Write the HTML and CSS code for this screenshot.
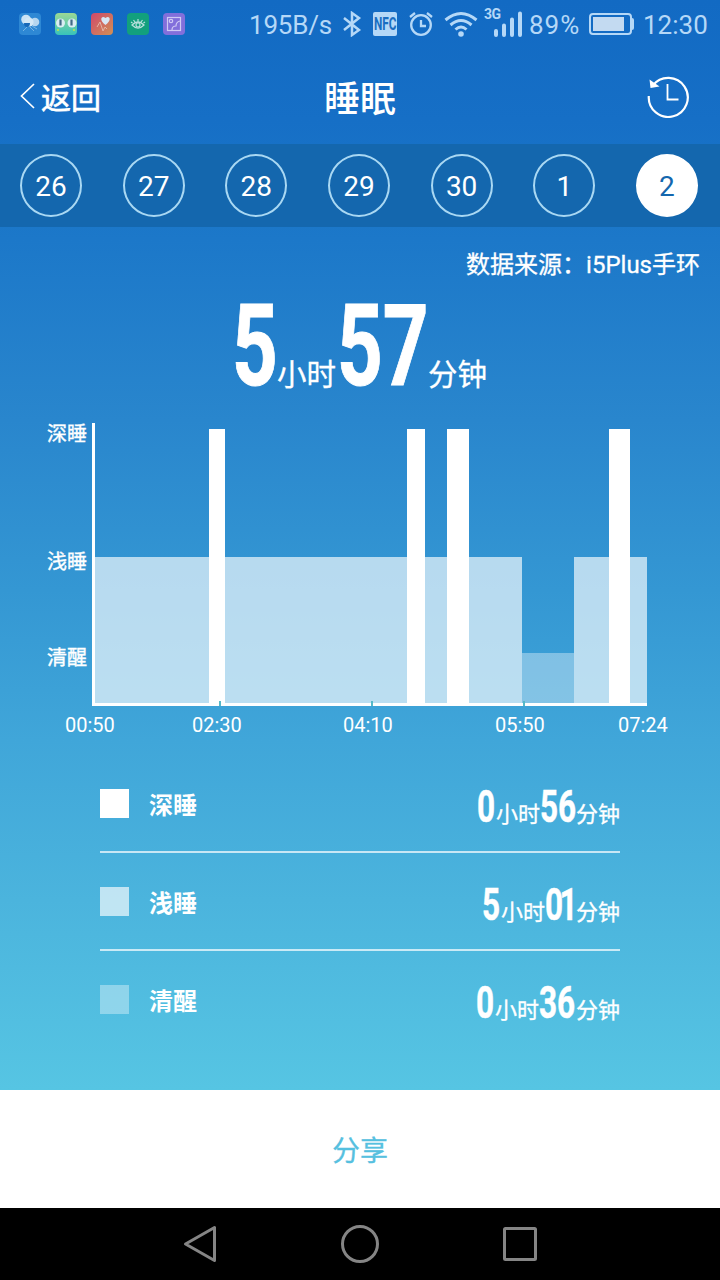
FILE: index.html
```html
<!DOCTYPE html>
<html lang="zh-CN">
<head>
<meta charset="utf-8">
<title>睡眠</title>
<link rel="stylesheet" href="styles.css">
</head>
<body>
<div class="screen">
  <div class="status">
    <div class="apps">
      <svg class="app" viewBox="0 0 22 22"><rect width="22" height="22" rx="4" fill="#2e88d4"/><circle cx="7" cy="6.500" r="4.800" fill="#cbe3f5"/><circle cx="16" cy="9" r="4.300" fill="#b5d6ef"/><circle cx="10" cy="9" r="4.600" fill="#d3e8f6"/><path d="M5 10h6q0 4-3 4t-3-4z" fill="#1769b9"/><path d="M8 14l-4 4M11 14l4 4M13 13l5 3" stroke="#74b4e4" fill="none"/></svg>
      <svg class="app" viewBox="0 0 22 22"><defs><linearGradient id="frog" x2="0" y2="1"><stop stop-color="#9bd895"/><stop offset="1" stop-color="#37c3ba"/></linearGradient></defs><rect width="22" height="22" rx="4" fill="url(#frog)"/><circle cx="5.500" cy="10" r="4.500" fill="#d9edf2"/><circle cx="17" cy="10" r="4.500" fill="#d9edf2"/><path d="M5.500 6.500v6M16.500 6.500v6" stroke="#416a87" stroke-width="2.200"/><path d="M2 17h2M18 17h2" stroke="#a5dd62" stroke-width="2"/></svg>
      <svg class="app" viewBox="0 0 22 22"><defs><linearGradient id="health" x2="1" y2="1"><stop stop-color="#d0486c"/><stop offset="1" stop-color="#d09155"/></linearGradient></defs><rect width="22" height="22" rx="4" fill="url(#health)"/><path d="M14.500 12c-7-5-4-10 0-7 4-3 7 2 0 7z" fill="#d9e7f4"/><path d="M6 14l3-5 3 9 2-4 2 2" stroke="#e3b4a5" fill="none"/></svg>
      <svg class="app" viewBox="0 0 22 22"><rect width="22" height="22" rx="4" fill="#12a07d"/><g fill="none" stroke="#b9e0dd" stroke-width="1.200"><path d="M5 12q6-6 12 0-6 6-12 0zM11 9V6M8 9L6.500 7M14 9l1.500-2M5.500 10L4 9M16.500 10L18 9"/><circle cx="11" cy="12" r="2"/></g></svg>
      <svg class="app" viewBox="0 0 22 22"><rect width="22" height="22" rx="4" fill="#826fdb"/><g fill="none" stroke="#cfc9f4" stroke-width="1.200"><rect x="4.500" y="4.500" width="13" height="13"/><circle cx="8" cy="8" r="1.700"/><path d="M9 17q0-4 4-4 0-4 4-5"/></g></svg>
    </div>
    <span class="speed">195B/s</span>
    <svg class="bt" viewBox="0 0 20 26"><path d="M2 7l15 12-7 5V2l7 5L2 19" fill="none" stroke="#b5d8f7" stroke-width="2.500"/></svg>
    <span class="nfc"><span class="nfc-text">NFC</span></span>
    <svg class="alarm" viewBox="0 0 26 26"><g fill="none" stroke="#b5d8f7" stroke-width="2.300"><circle cx="13" cy="14" r="9.800"/><path d="M13 9v6h5M2 6l5-4M24 6l-5-4"/></g></svg>
    <svg class="wifi" viewBox="0 0 34 26"><g fill="none" stroke="#b5d8f7" stroke-width="3"><path d="M1.500 9q15.500-13 31 0M6.500 14q10.500-9 21 0M11.500 18.500q5.500-5 11 0"/></g><circle cx="17" cy="23" r="2.800" fill="#b5d8f7"/></svg>
    <div class="signal"><span class="net">3G</span><svg class="bars" viewBox="0 0 30 26"><path d="M3 20v4M11 14.500v9.500M19 8.500v15.500M27 2.500v21.500" stroke="#b5d8f7" stroke-width="4" stroke-linecap="round"/></svg></div>
    <span class="percent">89%</span>
    <svg class="battery" viewBox="0 0 46 24"><rect x="1" y="2" width="41" height="20" rx="3" fill="none" stroke="#b5d8f7" stroke-width="2"/><rect x="4" y="5" width="31" height="14" fill="#c3daf1"/><path d="M43 6q2 0 2 2v8q0 2-2 2z" fill="#b5d8f7"/></svg>
    <span class="clock">12:30</span>
  </div>

  <header class="header">
    <div class="back"><svg class="chevron" viewBox="0 0 15 26"><path d="M14 1L1.500 13 14 25" fill="none" stroke="#fff" stroke-width="1.700"/></svg><span>返回</span></div>
    <h1 class="title">睡眠</h1>
    <svg class="history" viewBox="0 0 44 44"><path d="M2.800 22A19.500 19.500 0 1 0 6.800 11.500" fill="none" stroke="#fff" stroke-width="2.200"/><path d="M3.500 5.500l1 8.500 9-1.500z" fill="#fff"/><path d="M21.500 10v15.500h11" fill="none" stroke="#fff" stroke-width="1.800"/></svg>
  </header>

  <nav class="days">
    <span class="day">26</span><span class="day">27</span><span class="day">28</span><span class="day">29</span><span class="day">30</span><span class="day">1</span><span class="day day-active">2</span>
  </nav>

  <main class="content">
    <div class="source">数据来源：i5Plus手环</div>
    <div class="total"><span class="big one"><span class="narrow">5</span></span><span class="unit hours">小时</span><span class="big two"><span class="narrow">57</span></span><span class="unit">分钟</span></div>

    <section class="chart">
      <div class="levels"><span class="level deep-label">深睡</span><span class="level light-label">浅睡</span><span class="level">清醒</span></div>
      <div class="plot">
        <i class="light" style="width:114px"></i><i class="deep" style="width:16px"></i><i class="light" style="width:182px"></i><i class="deep" style="width:18px"></i><i class="light" style="width:21.500px"></i><i class="deep" style="width:22px"></i><i class="light" style="width:53.500px"></i><i class="awake" style="width:52px"></i><i class="light" style="width:35px"></i><i class="deep" style="width:21px"></i><i class="light" style="width:17px"></i>
        <b class="tick" style="left:124px"></b><b class="tick" style="left:276px"></b><b class="tick" style="left:428px"></b>
      </div>
    </section>
    <div class="times"><span>00:50</span><span>02:30</span><span>04:10</span><span>05:50</span><span>07:24</span></div>

    <section class="legend">
      <div class="row"><i class="swatch"></i><span class="name">深睡</span><div class="value"><span class="num w1"><span class="narrow">0</span></span><span class="small">小时</span><span class="num w2"><span class="narrow">56</span></span><span class="small">分钟</span></div></div>
      <div class="row"><i class="swatch swatch-light"></i><span class="name">浅睡</span><div class="value"><span class="num w1"><span class="narrow">5</span></span><span class="small">小时</span><span class="num w2 w2-slim"><span class="narrow">01</span></span><span class="small">分钟</span></div></div>
      <div class="row"><i class="swatch swatch-awake"></i><span class="name">清醒</span><div class="value"><span class="num w1"><span class="narrow">0</span></span><span class="small">小时</span><span class="num w2 w2-wide"><span class="narrow">36</span></span><span class="small">分钟</span></div></div>
    </section>
  </main>

  <div class="share">分享</div>
  <div class="softkeys">
    <svg class="key" viewBox="0 0 40 40"><path d="M5.500 20L34.500 3.500v33z" fill="none" stroke="#858585" stroke-width="3" stroke-linejoin="round"/></svg>
    <svg class="key" viewBox="0 0 40 40"><circle cx="20" cy="20" r="17.500" fill="none" stroke="#858585" stroke-width="3"/></svg>
    <svg class="key" viewBox="0 0 40 40"><rect x="4.500" y="4.500" width="31" height="31" rx="1" fill="none" stroke="#858585" stroke-width="3"/></svg>
  </div>
</div>
</body>
</html>
```
FILE: styles.css
```css
* { box-sizing: border-box; }
body { margin: 0; font-family: Roboto, "Noto Sans CJK SC", sans-serif; color: #fff; }
.screen {
  width: 720px; height: 1280px; overflow: hidden;
  display: flex; flex-direction: column;
  background: linear-gradient(#126ac3 0, #166fc6 120px, #1c78c9 240px, #2986cd 420px, #3497d3 590px, #40a6d9 740px, #4bb4dd 900px, #56c5e3 1090px);
}
svg { display: block; flex: none; }

.status { height: 48px; flex: none; display: flex; align-items: center; padding-left: 19px; color: #b5d8f7; font-size: 26px; line-height: 48px; white-space: nowrap; }
.apps { display: flex; gap: 14px; width: 230px; }
.app { width: 22px; height: 22px; }
.speed { width: 92px; letter-spacing: -.2px; padding-top: 2px; }
.bt { width: 20px; height: 26px; margin-left: 1px; }
.nfc { width: 24px; height: 24px; margin-left: 11px; border-radius: 2px; background: #b5d8f7; display: flex; justify-content: center; align-items: center; }
.nfc-text { color: #1a6ec1; font-size: 19px; font-weight: 700; transform: scaleX(.62); }
.alarm { width: 26px; height: 26px; margin-left: 11px; }
.wifi { width: 34px; height: 26px; margin-left: 10px; }
.signal { position: relative; width: 40px; height: 48px; margin-left: 6px; }
.net { position: absolute; left: 0; top: 6px; font-size: 14px; line-height: 16px; font-weight: 700; letter-spacing: -.5px; }
.bars { width: 30px; height: 26px; margin: 11px 0 0 9px; }
.percent { width: 60px; margin-left: 5px; padding-top: 2px; letter-spacing: 1px; }
.battery { width: 46px; height: 24px; }
.clock { margin-left: 8px; padding-top: 2px; }

.header { height: 96px; flex: none; display: grid; grid-template-columns: 1fr auto 1fr; align-items: center; padding: 0 30px 0 20px; }
.back { display: flex; align-items: center; gap: 6px; font-size: 30px; -webkit-text-stroke: .6px; }
.chevron { width: 15px; height: 26px; }
.title { margin: 7px 0 0 10px; font-size: 36px; line-height: 48px; font-weight: 500; }
.history { width: 44px; height: 44px; justify-self: end; }

.days { height: 83px; flex: none; display: flex; justify-content: space-between; padding: 10px 22px 0 20px; background: #1467ae; }
.day { width: 62px; height: 63px; border: 2px solid #a9d8f3; border-radius: 50%; font-size: 28px; line-height: 62px; text-align: center; }
.day-active { background: #fff; border-color: #fff; color: #1467ae; }

.content { height: 863px; flex: none; display: flex; flex-direction: column; }
.source { height: 59px; padding: 20px 20px 0 0; font-size: 24px; line-height: 36px; text-align: right; -webkit-text-stroke: .3px; }
.narrow { display: inline-block; transform: scaleX(.7); transform-origin: left; font-weight: 700; }
.total { height: 137px; padding-left: 232px; display: flex; align-items: baseline; line-height: 120px; }
.big { display: block; font-size: 114px; white-space: nowrap; -webkit-text-stroke: 1px; }
.one { width: 45px; }
.two { width: 91px; }
.unit { font-size: 29.500px; -webkit-text-stroke: .3px; }
.hours { width: 60px; }

.chart { height: 283px; display: flex; }
.levels { width: 92px; padding: 1px 5px 0 0; text-align: right; font-size: 20px; line-height: 20px; display: flex; flex-direction: column; -webkit-text-stroke: .4px; }
.deep-label { margin-bottom: 108px; }
.light-label { margin-bottom: 76px; }
.plot { position: relative; width: 555px; display: flex; align-items: flex-end; border-left: 3px solid #fff; border-bottom: 3px solid #fff; }
.deep, .light, .awake { flex: none; }
.deep { height: 274px; background: #fff; }
.light { height: 146px; background: rgba(255,255,255,.65); }
.awake { height: 50px; background: rgba(255,255,255,.36); }
.tick { position: absolute; bottom: -3px; width: 2px; height: 5px; background: #55b9c9; }
.times { display: grid; grid-template-columns: 127px 151px 152px 123px 50px; margin: 7px 0 0 65px; height: 42px; font-size: 20px; line-height: 24px; }

.legend { width: 520px; margin-left: 100px; }
.row { height: 98px; display: flex; align-items: center; border-bottom: 2px solid rgba(255,255,255,.7); }
.row:last-child { border-bottom-color: transparent; }
.swatch { width: 29px; height: 29px; background: #fff; }
.swatch-light { background: rgba(255,255,255,.65); }
.swatch-awake { background: rgba(255,255,255,.36); }
.name { margin-left: 20px; font-size: 24px; font-weight: 700; }
.value { margin-left: auto; display: flex; align-items: baseline; line-height: 60px; padding-top: 15px; }
.num { font-size: 45px; white-space: nowrap; -webkit-text-stroke: .5px; }
.w1 { width: 19px; }
.w2 { width: 36px; }
.w2-slim { width: 31px; letter-spacing: -5px; }
.w2-wide { width: 37px; }
.small { font-size: 22px; -webkit-text-stroke: .3px; }

.share { height: 118px; flex: none; display: flex; align-items: center; justify-content: center; background: #fff; color: #56c0df; font-size: 28px; -webkit-text-stroke: .3px; }
.softkeys { height: 72px; flex: none; display: flex; align-items: center; justify-content: center; gap: 120px; background: #000; }
.key { width: 40px; height: 40px; }
```
